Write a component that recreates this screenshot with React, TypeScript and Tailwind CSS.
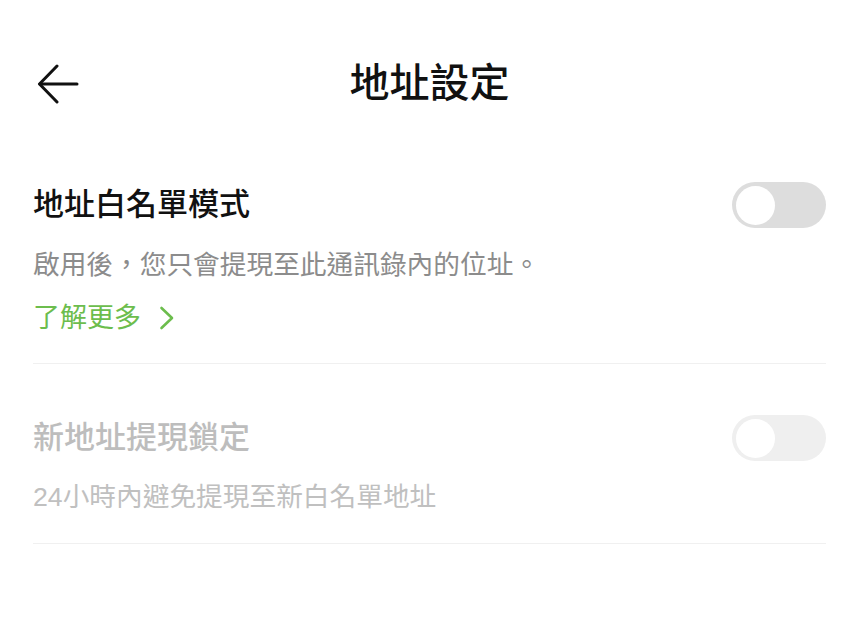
const font = { fontFamily: '"Liberation Sans", "Noto Sans CJK TC", sans-serif' }

function Toggle({ disabled }: { disabled?: boolean }) {
  return (
    <div
      className={`flex h-[46px] w-[94px] shrink-0 items-center rounded-full px-[4px] ${
        disabled ? 'bg-[#efefef]' : 'bg-[#dddddd]'
      }`}
    >
      <div className="h-[39px] w-[39px] rounded-full bg-white" />
    </div>
  )
}

function BackArrow() {
  return (
    <svg width="42" height="40" viewBox="0 0 42 40" fill="none" stroke="#111" strokeWidth="3" strokeLinecap="round" strokeLinejoin="round">
      <path d="M40 20H3" />
      <path d="M20 2L2.5 20L20 38" />
    </svg>
  )
}

function Chevron() {
  return (
    <svg width="16" height="24" viewBox="0 0 16 24" fill="none" stroke="#6cbd4d" strokeWidth="2.6" strokeLinecap="round" strokeLinejoin="round">
      <path d="M2.5 2L13 12L2.5 22" />
    </svg>
  )
}

export default function App() {
  return (
    <div className="min-h-[622px] w-[856px] bg-white pl-[33px] pr-[30px]" style={font}>
      <header className="relative flex h-[166px] items-center justify-center">
        <button className="absolute left-[4px] top-[64px]">
          <BackArrow />
        </button>
        <h1 className="text-[40px] font-medium leading-none text-[#111]">地址設定</h1>
      </header>

      <section className="border-b border-[#f0f0f0] pb-[27px] pt-[16px]">
        <div className="flex h-[46px] items-center justify-between">
          <h2 className="text-[31px] font-medium leading-[40px] text-[#111]">地址白名單模式</h2>
          <Toggle />
        </div>
        <p className="mt-[19px] text-[26.7px] leading-[36px] text-[#8c8c8c]">
          啟用後，您只會提現至此通訊錄內的位址。
        </p>
        <a className="mt-[17px] flex items-center gap-[18px] text-[27px] leading-[36px] text-[#6cbd4d]">
          了解更多
          <Chevron />
        </a>
      </section>

      <section className="border-b border-[#f0f0f0] pb-[28px] pt-[51px]">
        <div className="flex h-[46px] items-center justify-between">
          <h2 className="text-[31px] font-medium leading-[40px] text-[#bdbdbd]">新地址提現鎖定</h2>
          <Toggle disabled />
        </div>
        <p className="mt-[18px] text-[26.7px] leading-[36px] text-[#c0c0c0]">24小時內避免提現至新白名單地址</p>
      </section>
    </div>
  )
}
